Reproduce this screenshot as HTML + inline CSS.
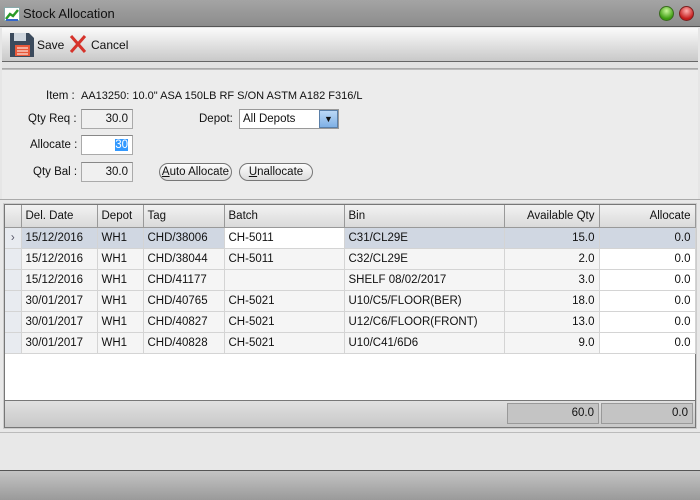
<!DOCTYPE html><html><head><style>
*{margin:0;padding:0;box-sizing:border-box}
body{width:700px;height:500px;overflow:hidden;font-family:"Liberation Sans",sans-serif;font-size:11.5px;color:#111;background:#e6e6e6;position:relative}
.a{position:absolute}
.title{left:0;top:0;width:700px;height:27px;background:linear-gradient(#a4a4a4,#8c8c8c);border-bottom:1px solid #555}
.tb{left:2px;top:28px;width:696px;height:34px;background:linear-gradient(#fafafa,#c9c9c9);border-bottom:1px solid #666}
.form{left:2px;top:69px;width:696px;height:130px;background:#ececec;border-top:1px solid #bbb}
.box{background:#f0f0f0;border:1px solid #aaa;border-top-color:#888;text-align:right;padding:3px 4px;height:20px}
.btn{border:1px solid #777;border-radius:10px;background:linear-gradient(#fdfdfd,#dcdcdc);height:18px;text-align:center;line-height:16px}
table{border-collapse:collapse;table-layout:fixed}
td{height:21px;border-right:1px solid #d4d4d4;border-bottom:1px solid #d4d4d4;padding:0 4px;white-space:nowrap;background:#f5f5f5}
th{height:22px;font-weight:normal;text-align:left;padding:0 4px;background:linear-gradient(#f2f2f2,#dadada);border-right:1px solid #999;border-bottom:1px solid #999}
.r{text-align:right}
.sel td{background:#d0d7e2}
td.w{background:#fff}
td.ind{background:#e8ebf0;padding:0}
</style></head><body>
<div class="a title"><svg class="a" style="left:4px;top:7px" width="16" height="14"><rect x="0.5" y="0.5" width="15" height="13" fill="#fff" stroke="#8aa"/><path d="M2 12 L6 7 L9 9 L14 3" stroke="#2a9a2a" stroke-width="2.5" fill="none"/><path d="M2 13 L14 13" stroke="#36c" stroke-width="2"/></svg>
<div class="a" style="left:23px;top:6px;font-size:13px">Stock Allocation</div>
<div class="a" style="left:659px;top:6px;width:15px;height:15px;border-radius:50%;background:radial-gradient(circle at 50% 30%,#c8f79a,#3c9c10 70%);border:1px solid #3a6a20"></div>
<div class="a" style="left:679px;top:6px;width:15px;height:15px;border-radius:50%;background:radial-gradient(circle at 50% 30%,#ffb0b0,#c41b1b 70%);border:1px solid #7a2020"></div></div>
<div class="a tb">
<svg class="a" style="left:7px;top:4px" width="26" height="26"><path d="M1 1H20L25 6V25H1Z" fill="#3b4a5c"/><rect x="5" y="1" width="12" height="8" fill="#cfd6de"/><rect x="6" y="13" width="15" height="11" fill="#e8583a"/><path d="M8 16H19M8 19H19M8 22H19" stroke="#fff" stroke-width="1"/></svg>
<div class="a" style="left:35px;top:10px;font-size:12px">Save</div>
<svg class="a" style="left:67px;top:6px" width="18" height="20"><path d="M2 2L16 18M16 2L2 18" stroke="#d6332b" stroke-width="3"/></svg>
<div class="a" style="left:89px;top:10px;font-size:12px">Cancel</div></div>
<div class="a" style="left:2px;top:62px;width:696px;height:7px;background:#e2e2e2;border-bottom:1px solid #aaa"></div>
<div class="a form"></div>
<div class="a" style="left:46px;top:90px">Item :</div>
<div class="a" style="left:81px;top:90px;font-size:11px">AA13250: 10.0" ASA 150LB RF S/ON ASTM A182 F316/L</div>
<div class="a" style="left:28px;top:113px">Qty Req :</div>
<div class="a box" style="left:81px;top:109px;width:52px">30.0</div>
<div class="a" style="left:199px;top:113px">Depot:</div>
<div class="a" style="left:239px;top:109px;width:100px;height:20px;background:#fff;border:1px solid #999;padding:3px 3px">All Depots</div>
<div class="a" style="left:319px;top:110px;width:19px;height:18px;background:linear-gradient(#bcd8f6,#7eb0e6);border:1px solid #5a7fa8;text-align:center;font-size:9px;line-height:16px">▼</div>
<div class="a" style="left:30px;top:139px">Allocate :</div>
<div class="a box" style="left:81px;top:135px;width:52px;background:#fff"><span style="background:#3399ff;color:#fff">30</span></div>
<div class="a" style="left:33px;top:166px">Qty Bal :</div>
<div class="a box" style="left:81px;top:162px;width:52px">30.0</div>
<div class="a btn" style="left:159px;top:163px;width:73px"><u>A</u>uto Allocate</div>
<div class="a btn" style="left:239px;top:163px;width:74px"><u>U</u>nallocate</div>
<div class="a" style="left:0;top:199px;width:700px;height:233px;background:#e8e8e8;border-top:1px solid #aaa"></div>
<div class="a" style="left:4px;top:204px;width:692px;height:224px;background:#fff;border:1px solid #777;outline:1px solid #ccc">
<table style="width:690px">
<colgroup><col style="width:16px"><col style="width:76px"><col style="width:46px"><col style="width:81px"><col style="width:120px"><col style="width:160px"><col style="width:95px"><col style="width:96px"></colgroup>
<tr><th></th><th>Del. Date</th><th>Depot</th><th>Tag</th><th>Batch</th><th>Bin</th><th class="r">Available Qty</th><th class="r">Allocate</th></tr>
<tr class="sel"><td class="ind" style="text-align:center;color:#556">›</td><td>15/12/2016</td><td>WH1</td><td>CHD/38006</td><td class="w">CH-5011</td><td>C31/CL29E</td><td class="r">15.0</td><td class="r">0.0</td></tr>
<tr><td class="ind"></td><td>15/12/2016</td><td>WH1</td><td>CHD/38044</td><td>CH-5011</td><td>C32/CL29E</td><td class="r">2.0</td><td class="r w">0.0</td></tr>
<tr><td class="ind"></td><td>15/12/2016</td><td>WH1</td><td>CHD/41177</td><td></td><td>SHELF 08/02/2017</td><td class="r">3.0</td><td class="r w">0.0</td></tr>
<tr><td class="ind"></td><td>30/01/2017</td><td>WH1</td><td>CHD/40765</td><td>CH-5021</td><td>U10/C5/FLOOR(BER)</td><td class="r">18.0</td><td class="r w">0.0</td></tr>
<tr><td class="ind"></td><td>30/01/2017</td><td>WH1</td><td>CHD/40827</td><td>CH-5021</td><td>U12/C6/FLOOR(FRONT)</td><td class="r">13.0</td><td class="r w">0.0</td></tr>
<tr><td class="ind"></td><td>30/01/2017</td><td>WH1</td><td>CHD/40828</td><td>CH-5021</td><td>U10/C41/6D6</td><td class="r">9.0</td><td class="r w">0.0</td></tr>
</table>
<div class="a" style="left:0;top:195px;width:690px;height:27px;background:linear-gradient(#e0e0e0,#c8c8c8);border-top:1px solid #777"></div>
<div class="a r" style="left:502px;top:198px;width:92px;height:21px;background:#c4c4c4;border:1px solid #999;padding:3px 4px">60.0</div>
<div class="a r" style="left:596px;top:198px;width:92px;height:21px;background:#c4c4c4;border:1px solid #999;padding:3px 4px">0.0</div>
</div>
<div class="a" style="left:0;top:432px;width:700px;height:38px;background:#e8e8e8;border-top:1px solid #bbb"></div>
<div class="a" style="left:0;top:470px;width:700px;height:30px;background:linear-gradient(#c4c4c4,#9a9a9a);border-top:1px solid #555"></div>
</body></html>
